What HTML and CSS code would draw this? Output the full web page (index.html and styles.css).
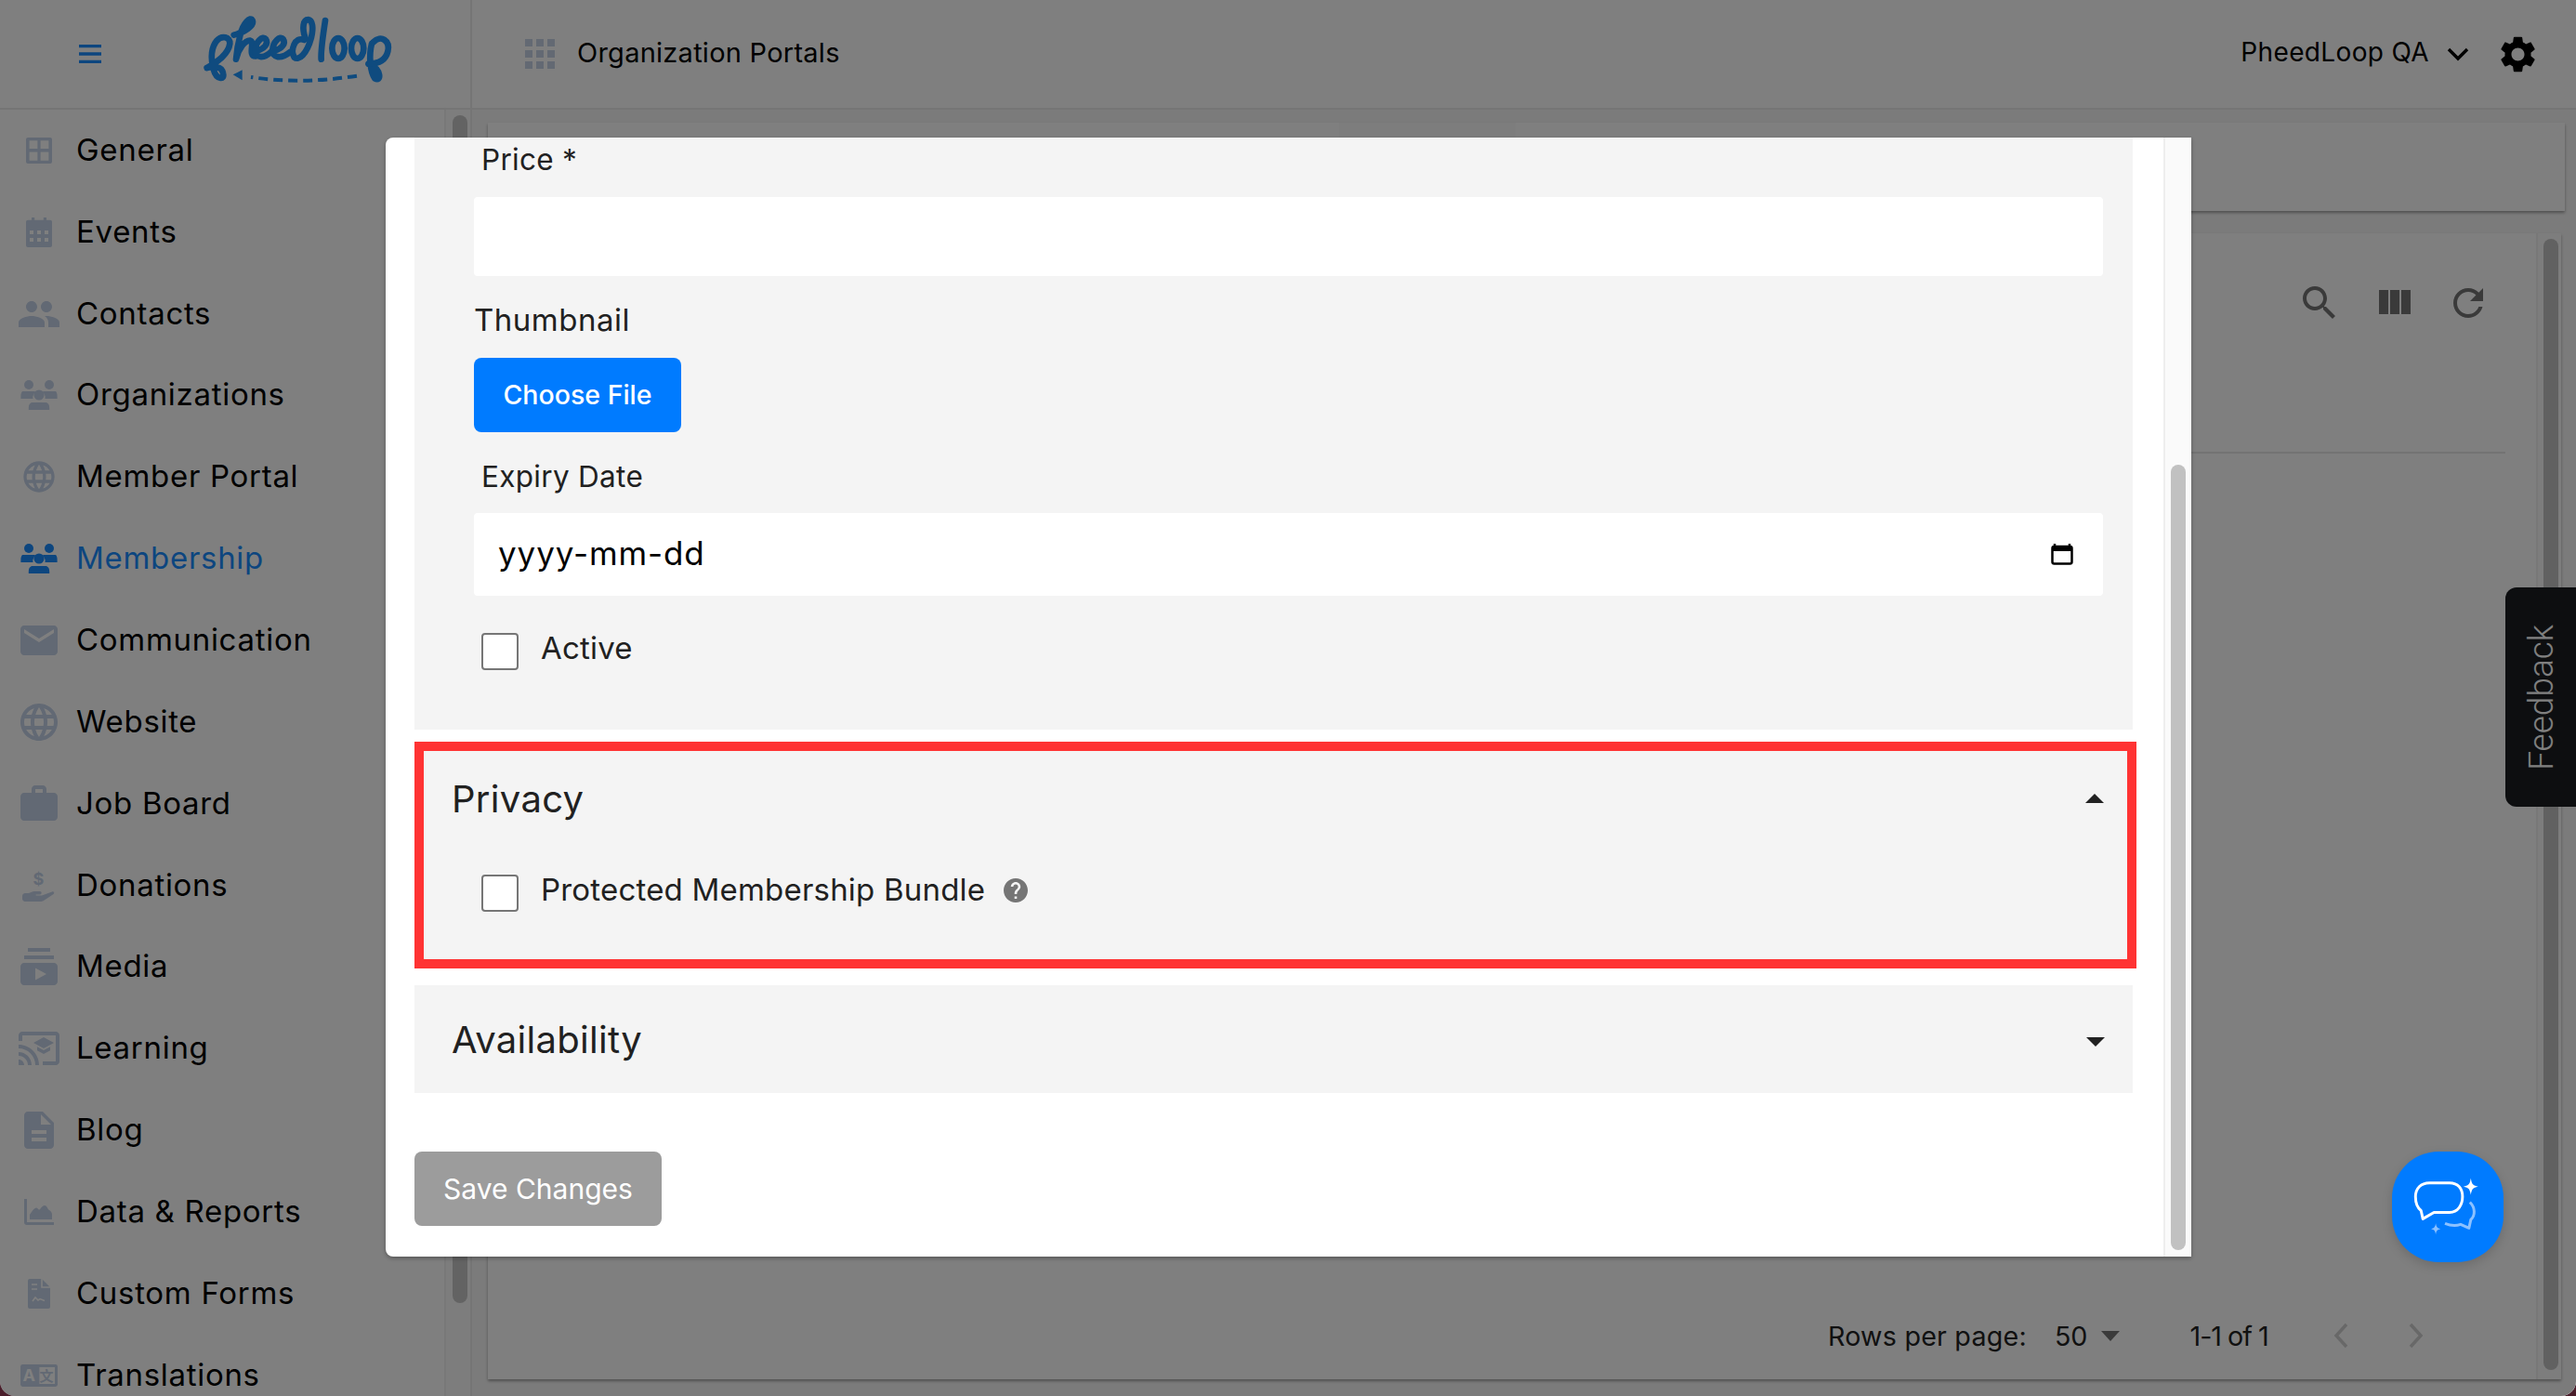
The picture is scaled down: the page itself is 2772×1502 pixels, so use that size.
FILE: index.html
```html
<!DOCTYPE html>
<html lang="en">
<head>
<meta charset="utf-8">
<title>Organization Portals</title>
<link rel="stylesheet" href="styles.css">
</head>
<body>
<div class="window">
  <header class="topbar">
    <div class="brand">
      <svg class="burger" viewBox="0 0 24 20"><path d="M0 1.500h24M0 10h24M0 18.500h24"/></svg>
      <svg class="logo" viewBox="0 0 900 360">
        <g class="logo-ink">
          <path d="M128 228C160 212 198 182 202 150C204 128 176 122 160 140C144 160 138 192 150 235C158 265 187 270 180 245C176 222 150 222 128 228"/>
          <path d="M215 122C250 112 282 92 275 75C268 60 245 85 236 120C228 150 224 176 222 200C230 165 252 138 268 140C284 144 258 192 286 190"/>
          <path d="M290 172C312 168 328 150 318 135C308 122 285 145 284 170C283 196 310 202 340 172"/>
          <path d="M346 172C368 168 384 150 374 135C364 122 341 145 340 170C339 196 366 202 398 176"/>
          <path d="M442 138C412 125 396 172 410 194C424 206 450 185 465 130C472 100 470 75 455 72C438 72 435 100 445 130"/>
          <path d="M510 75C505 110 495 170 497 200"/>
          <ellipse cx="552" cy="165" rx="20" ry="33"/>
          <ellipse cx="614" cy="165" rx="20" ry="33"/>
          <path d="M660 150C650 190 655 240 670 262C690 275 695 235 650 215"/>
          <path d="M665 145C690 120 720 140 712 175C705 205 680 215 650 215"/>
          <path class="logo-dash" d="M612 254Q430 282 270 258"/>
        </g>
        <path class="logo-head" d="M212 250L242 235V268Z"/>
      </svg>
    </div>
    <div class="topbar-main">
      <svg class="apps" viewBox="0 0 32 32"><path d="M0 0h8v8H0zM12 0h8v8h-8zM24 0h8v8h-8zM0 12h8v8H0zM12 12h8v8h-8zM24 12h8v8h-8zM0 24h8v8H0zM12 24h8v8h-8zM24 24h8v8h-8z"/></svg>
      <span class="portal-title">Organization Portals</span>
      <span class="org-name">PheedLoop QA</span>
      <svg class="org-chevron" viewBox="0 0 24 15"><path d="M2 2l10 10L22 2"/></svg>
      <svg class="gear" viewBox="2.500 2 19 20"><path d="M19.140 12.940c.04-.3.06-.61.06-.94 0-.32-.02-.64-.07-.94l2.030-1.580c.18-.14.23-.41.12-.61l-1.920-3.320c-.12-.22-.37-.29-.59-.22l-2.390.96c-.5-.38-1.030-.7-1.620-.94l-.36-2.540c-.04-.24-.24-.41-.48-.41h-3.840c-.24 0-.43.17-.47.41l-.36 2.540c-.59.24-1.130.57-1.620.94l-2.390-.96c-.22-.08-.47 0-.59.22L2.740 8.870c-.12.21-.08.47.12.61l2.030 1.580c-.05.3-.09.63-.09.94s.02.64.07.94l-2.030 1.580c-.18.14-.23.41-.12.61l1.920 3.320c.12.22.37.29.59.22l2.390-.96c.5.38 1.030.7 1.620.94l.36 2.540c.05.24.24.41.48.41h3.840c.24 0 .44-.17.47-.41l.36-2.540c.59-.24 1.130-.56 1.620-.94l2.390.96c.22.08.47 0 .59-.22l1.920-3.320c.12-.22.07-.47-.12-.61l-2.010-1.580zM12 15.600c-1.980 0-3.600-1.620-3.600-3.600s1.620-3.600 3.600-3.600 3.600 1.620 3.600 3.600-1.620 3.600-3.600 3.600z"/></svg>
    </div>
  </header>

  <div class="workspace">
    <aside class="sidebar">
      <nav class="nav">
        <a class="nav-item"><svg class="nav-icon" viewBox="0 0 24 24"><path fill-rule="evenodd" d="M6 5h12a1 1 0 0 1 1 1v12a1 1 0 0 1-1 1H6a1 1 0 0 1-1-1V6a1 1 0 0 1 1-1zm.8 1.600v4.400h4.400V6.600zm6 0v4.400h4.400V6.600zm-6 6.200v4.600h4.400v-4.600zm6 0v4.600h4.400v-4.600z"/></svg><span>General</span></a>
        <a class="nav-item"><svg class="nav-icon" viewBox="0 0 24 24"><path fill-rule="evenodd" d="M8 4h1.600v1.400h4.800V4H16v1.400h2a1 1 0 0 1 1 1V19a1 1 0 0 1-1 1H6a1 1 0 0 1-1-1V6.400a1 1 0 0 1 1-1h2zM7 11h2v2H7zm4 0h2v2h-2zm4 0h2v2h-2zM7 15h2v2H7zm4 0h2v2h-2zm4 0h2v2h-2z"/></svg><span>Events</span></a>
        <a class="nav-item"><svg class="nav-icon" viewBox="0 0 24 24"><path d="M16 11c1.660 0 2.990-1.340 2.990-3S17.660 5 16 5c-1.660 0-3 1.340-3 3s1.340 3 3 3zm-8 0c1.660 0 2.990-1.340 2.990-3S9.660 5 8 5C6.340 5 5 6.340 5 8s1.340 3 3 3zm0 2c-2.330 0-7 1.170-7 3.500V19h14v-2.500c0-2.330-4.670-3.500-7-3.500zm8 0c-.29 0-.62.02-.97.05 1.160.84 1.970 1.970 1.970 3.450V19h6v-2.500c0-2.330-4.670-3.500-7-3.500z"/></svg><span>Contacts</span></a>
        <a class="nav-item"><svg class="nav-icon" viewBox="0 0 24 24"><circle cx="6.500" cy="6.500" r="2.500"/><circle cx="17.500" cy="6.500" r="2.500"/><circle cx="12" cy="12" r="2.800"/><path d="M3 10h7l-.8 1.500c-.6 1-.6 1.800-.4 2.500H2.200v-1.500C2.200 11.500 2.500 10.500 3 10zM14 10h7c.6.5.8 1.500.8 2.500V14h-6.600c.2-.7.2-1.500-.4-2.500zM8 16h8c1 .5 1.600 1.300 1.600 3v1H6.400v-1c0-1.700.6-2.500 1.600-3z"/></svg><span>Organizations</span></a>
        <a class="nav-item"><svg class="nav-icon nav-icon-sm" viewBox="0 0 24 24"><path d="M11.990 2C6.470 2 2 6.480 2 12s4.470 10 9.990 10C17.520 22 22 17.520 22 12S17.520 2 11.990 2zm6.930 6h-2.950c-.32-1.250-.78-2.450-1.380-3.560 1.840.63 3.370 1.910 4.330 3.560zM12 4.040c.83 1.200 1.480 2.530 1.910 3.960h-3.820c.43-1.430 1.080-2.760 1.910-3.960zM4.260 14C4.100 13.360 4 12.690 4 12s.1-1.360.26-2h3.380c-.08.66-.14 1.320-.14 2 0 .68.06 1.340.14 2H4.260zm.82 2h2.950c.32 1.250.78 2.450 1.380 3.560-1.840-.63-3.370-1.900-4.330-3.560zm2.950-8H5.080c.96-1.660 2.490-2.930 4.330-3.560C8.810 5.550 8.350 6.750 8.030 8zM12 19.960c-.83-1.200-1.480-2.530-1.910-3.960h3.820c-.43 1.430-1.080 2.760-1.910 3.960zM14.340 14H9.660c-.09-.66-.16-1.320-.16-2 0-.68.07-1.350.16-2h4.680c.09.650.16 1.320.16 2 0 .68-.07 1.340-.16 2zm.25 5.560c.6-1.110 1.060-2.310 1.380-3.560h2.950c-.96 1.650-2.490 2.930-4.330 3.560zM16.360 14c.08-.66.14-1.320.14-2 0-.68-.06-1.340-.14-2h3.380c.16.640.26 1.310.26 2s-.1 1.360-.26 2h-3.380z"/></svg><span>Member Portal</span></a>
        <a class="nav-item is-active"><svg class="nav-icon" viewBox="0 0 24 24"><circle cx="6.500" cy="6.500" r="2.500"/><circle cx="17.500" cy="6.500" r="2.500"/><circle cx="12" cy="12" r="2.800"/><path d="M3 10h7l-.8 1.500c-.6 1-.6 1.800-.4 2.500H2.200v-1.500C2.200 11.500 2.500 10.500 3 10zM14 10h7c.6.5.8 1.500.8 2.500V14h-6.600c.2-.7.2-1.500-.4-2.500zM8 16h8c1 .5 1.600 1.300 1.600 3v1H6.400v-1c0-1.700.6-2.500 1.600-3z"/></svg><span>Membership</span></a>
        <a class="nav-item"><svg class="nav-icon" viewBox="0 0 24 24"><path d="M20 4H4c-1.100 0-1.990.9-1.990 2L2 18c0 1.100.9 2 2 2h16c1.100 0 2-.9 2-2V6c0-1.100-.9-2-2-2zm0 4l-8 5-8-5V6l8 5 8-5v2z"/></svg><span>Communication</span></a>
        <a class="nav-item"><svg class="nav-icon" viewBox="0 0 24 24"><path d="M11.990 2C6.470 2 2 6.480 2 12s4.470 10 9.990 10C17.520 22 22 17.520 22 12S17.520 2 11.990 2zm6.930 6h-2.950c-.32-1.250-.78-2.450-1.380-3.560 1.840.63 3.370 1.910 4.330 3.560zM12 4.040c.83 1.200 1.480 2.530 1.910 3.960h-3.820c.43-1.430 1.080-2.760 1.910-3.960zM4.260 14C4.100 13.360 4 12.690 4 12s.1-1.360.26-2h3.380c-.08.66-.14 1.320-.14 2 0 .68.06 1.340.14 2H4.260zm.82 2h2.950c.32 1.250.78 2.450 1.380 3.560-1.840-.63-3.370-1.900-4.330-3.560zm2.950-8H5.080c.96-1.660 2.490-2.930 4.330-3.560C8.810 5.550 8.350 6.750 8.030 8zM12 19.960c-.83-1.200-1.480-2.530-1.910-3.960h3.820c-.43 1.430-1.080 2.760-1.910 3.960zM14.340 14H9.660c-.09-.66-.16-1.320-.16-2 0-.68.07-1.350.16-2h4.680c.09.650.16 1.320.16 2 0 .68-.07 1.340-.16 2zm.25 5.560c.6-1.110 1.060-2.310 1.380-3.560h2.950c-.96 1.650-2.490 2.930-4.330 3.560zM16.360 14c.08-.66.14-1.320.14-2 0-.68-.06-1.340-.14-2h3.380c.16.640.26 1.310.26 2s-.1 1.360-.26 2h-3.380z"/></svg><span>Website</span></a>
        <a class="nav-item"><svg class="nav-icon" viewBox="0 0 24 24"><path d="M20 6h-4V4c0-1.110-.89-2-2-2h-4c-1.110 0-2 .89-2 2v2H4c-1.110 0-1.990.89-1.990 2L2 19c0 1.110.89 2 2 2h16c1.110 0 2-.89 2-2V8c0-1.110-.89-2-2-2zm-6 0h-4V4h4v2z"/></svg><span>Job Board</span></a>
        <a class="nav-item"><svg class="nav-icon" viewBox="0 0 24 24"><path d="M3 17.500c0-.8.7-1.500 1.500-1.500H6c1 0 2.500-1 3.500-1h3c1 0 1.200 1.700 0 1.700h-2c-.4 0-.4.5 0 .5h3l5.500-2c1-.3 1.500.7.800 1.300L14.500 20c-.6.4-1.200.5-2 .5H4.500c-.8 0-1.500-.7-1.500-1.500z"/><text class="nav-dollar" x="12" y="11.500">$</text></svg><span>Donations</span></a>
        <a class="nav-item"><svg class="nav-icon" viewBox="0 0 24 24"><path d="M20 8H4V6h16v2zm-2-6H6v2h12V2zm4 10v8c0 1.100-.9 2-2 2H4c-1.100 0-2-.9-2-2v-8c0-1.100.9-2 2-2h16c1.100 0 2 .9 2 2zm-6 4l-6-3.270v6.530L16 16z"/></svg><span>Media</span></a>
        <a class="nav-item"><svg class="nav-icon" viewBox="0 0 24 24"><path d="M21 3H3c-1.100 0-2 .9-2 2v3h2V5h18v14h-7v2h7c1.100 0 2-.9 2-2V5c0-1.100-.9-2-2-2zM1 18v3h3c0-1.660-1.340-3-3-3zm0-4v2c2.760 0 5 2.240 5 5h2c0-3.870-3.130-7-7-7zm0-4v2c4.970 0 9 4.030 9 9h2c0-6.080-4.930-11-11-11zm10 1.090v2L14.500 15l3.500-1.910v-2L14.500 13 11 11.090zM14.500 6L9 9l5.500 3L20 9l-5.500-3z"/></svg><span>Learning</span></a>
        <a class="nav-item"><svg class="nav-icon" viewBox="0 0 24 24"><path d="M14 2H6c-1.100 0-1.990.9-1.990 2L4 20c0 1.100.89 2 1.990 2H18c1.100 0 2-.9 2-2V8l-6-6zm2 16H8v-2h8v2zm0-4H8v-2h8v2zm-3-5V3.500L18.500 9H13z"/></svg><span>Blog</span></a>
        <a class="nav-item"><svg class="nav-icon" viewBox="0 0 24 24"><path d="M4 5h1.500v12.500H20V19H5.500A1.500 1.500 0 0 1 4 17.500zM7 16v-2.500C8 12 9.500 9.800 10.500 9.800c.8 0 1 1 1.500 1 .7 0 1.500-2.300 3-2.300 1.300 0 1.500 1.800 2.500 2.500 1 .7 1.500 1.500 1.500 2.500V16z"/></svg><span>Data &amp; Reports</span></a>
        <a class="nav-item"><svg class="nav-icon" viewBox="0 0 24 24"><path d="M7 4h6.500L18 8.500V19a1 1 0 0 1-1 1H7a1 1 0 0 1-1-1V5a1 1 0 0 1 1-1z"/><path class="nav-cut" d="M13.500 4v4.500H18M8 7h3M8 9.500h3M8.500 16l1.500-2 1.500 1.500 1-.7 2.500.9"/></svg><span>Custom Forms</span></a>
        <a class="nav-item"><svg class="nav-icon" viewBox="0 0 24 24"><rect x="2" y="6" width="20" height="12" rx="1.200"/><rect class="nav-pane" x="12.200" y="7.500" width="8.300" height="9"/><text class="nav-glyph" x="7" y="15">A</text><text class="nav-glyph-dark" x="16.300" y="15">文</text></svg><span>Translations</span></a>
      </nav>
      <div class="side-track"><div class="side-thumb"></div></div>
    </aside>

    <main class="content">
      <section class="tabs-card">
        <div class="tab"></div>
        <div class="tab tab-dim"></div>
        <div class="tab tab-fill"></div>
      </section>
      <section class="table-card">
        <div class="table-body">
          <div class="table-tools">
            <svg class="tool" viewBox="0 0 24 24"><path d="M15.500 14h-.79l-.28-.27C15.410 12.590 16 11.110 16 9.500 16 5.910 13.090 3 9.500 3S3 5.910 3 9.500 5.910 16 9.500 16c1.610 0 3.090-.59 4.230-1.570l.27.28v.79l5 4.990L20.490 19l-4.990-5zm-6 0C7.010 14 5 11.990 5 9.500S7.010 5 9.500 5 14 7.010 14 9.500 11.990 14 9.500 14z"/></svg>
            <svg class="tool" viewBox="0 0 24 24"><path d="M10 18h5V5h-5v13zm-6 0h5V5H4v13zM16 5v13h5V5h-5z"/></svg>
            <svg class="tool" viewBox="0 0 24 24"><path d="M17.650 6.350C16.200 4.900 14.210 4 12 4c-4.420 0-7.990 3.580-7.990 8s3.570 8 7.990 8c3.730 0 6.840-2.550 7.730-6h-2.080c-.82 2.330-3.040 4-5.650 4-3.310 0-6-2.690-6-6s2.690-6 6-6c1.660 0 3.140.69 4.220 1.780L13 11h7V4l-2.350 2.350z"/></svg>
          </div>
          <div class="table-rule"></div>
          <div class="pager">
            <span class="pager-label">Rows per page:</span>
            <span class="pager-size">50</span>
            <svg class="pager-caret" viewBox="0 0 20 11"><path d="M0 0h20L10 11z"/></svg>
            <span class="pager-range">1-1 of 1</span>
            <svg class="pager-arrow" viewBox="0 0 16 28"><path d="M14 2L3 14l11 12"/></svg>
            <svg class="pager-arrow" viewBox="0 0 16 28"><path d="M2 2l11 12L2 26"/></svg>
          </div>
        </div>
        <div class="table-track"><div class="table-thumb"></div></div>
      </section>
    </main>
  </div>

  <aside class="feedback"><span>Feedback</span></aside>
</div>

<div class="overlay"></div>

<div class="modal">
  <div class="modal-scroll">
    <div class="panel">
      <label class="field-label">Price *</label>
      <input class="text-input" type="text" aria-label="Price">
      <div class="thumb-label">Thumbnail</div>
      <button class="btn-primary" type="button">Choose File</button>
      <label class="field-label field-label-gap">Expiry Date</label>
      <div class="date-input">
        <span class="date-text">yyyy-mm-dd</span>
        <svg class="cal" viewBox="0 0 26 26"><path d="M5 2v3M21 2v3" class="cal-pin"/><rect x="2.500" y="5" width="21" height="18.500" rx="2" class="cal-box"/><path d="M2 6h22v4H2z"/></svg>
      </div>
      <div class="check-row check-row-active">
        <span class="check"></span><span class="check-label">Active</span>
      </div>
    </div>

    <section class="accordion accordion-flagged">
      <div class="accordion-head accordion-head-flagged">
        <h2 class="accordion-title">Privacy</h2>
        <svg class="accordion-caret" viewBox="0 0 20 10"><path d="M0 10L10 0l10 10z"/></svg>
      </div>
      <div class="check-row">
        <span class="check"></span><span class="check-label">Protected Membership Bundle</span>
        <svg class="help" viewBox="2 2 20 20"><path d="M12 2C6.480 2 2 6.480 2 12s4.480 10 10 10 10-4.480 10-10S17.520 2 12 2zm1 17h-2v-2h2v2zm2.070-7.750l-.9.920C13.450 12.900 13 13.500 13 15h-2v-.5c0-1.100.45-2.100 1.170-2.830l1.240-1.260c.37-.36.59-.86.59-1.410 0-1.100-.9-2-2-2s-2 .9-2 2H8c0-2.210 1.790-4 4-4s4 1.790 4 4c0 .88-.36 1.680-.93 2.250z"/></svg>
      </div>
    </section>

    <section class="accordion">
      <div class="accordion-head">
        <h2 class="accordion-title">Availability</h2>
        <svg class="accordion-caret accordion-caret-down" viewBox="0 0 20 10"><path d="M0 0l10 10L20 0z"/></svg>
      </div>
    </section>

    <button class="btn-save" type="button">Save Changes</button>
  </div>
  <div class="modal-track"><div class="modal-thumb"></div></div>
</div>

<button class="chat" type="button" aria-label="Chat">
  <svg viewBox="0 0 120 120">
    <path class="chat-line" d="M40 34h22c9 0 14 6 14 15s-5 17-14 17H45l-12 7-2-9c-4-3-6-8-6-15 0-9 6-15 15-15z"/>
    <path class="chat-soft" d="M84 55c6 6 6 14 1 19l-2 9-9-4c-6 2-12 1-17-1"/>
    <path class="chat-star" d="M85 29c1 6 2 8 8 9-6 1-7 3-8 9-1-6-2-8-8-9 6-1 7-3 8-9z"/>
    <path class="chat-star-soft" d="M47 78c.7 4 1.500 5 5 6-3.500 1-4.300 2-5 6-.7-4-1.500-5-5-6 3.500-1 4.300-2 5-6z"/>
  </svg>
</button>
</body>
</html>
```

FILE: styles.css
```css
* { box-sizing: border-box; }
html, body { margin: 0; height: 100%; }
body {
  width: 2772px;
  height: 1502px;
  overflow: hidden;
  position: relative;
  background: #4a1d2a;
  font-family: Inter, "Liberation Sans", sans-serif;
  color: #000;
}

/* application shell, dimmed by .overlay */
.window {
  position: relative;
  width: 2772px;
  height: 1502px;
  display: flex;
  flex-direction: column;
  background: #fff;
  overflow: hidden;
  border-radius: 0 0 16px 16px;
}
.topbar {
  display: flex;
  height: 118px;
  flex: none;
  border-bottom: 2px solid #ebebeb;
}
.brand {
  width: 508px;
  flex: none;
  display: flex;
  align-items: center;
  padding-left: 85px;
  border-right: 2px solid #ebebeb;
}
.burger { width: 24px; height: 20px; flex: none; }
.burger path { stroke: #1a8cff; stroke-width: 3.500; fill: none; }
.logo { width: 300px; height: 120px; flex: none; margin-left: 71px; margin-top: -2px; }
.logo-ink { fill: none; stroke: #1e96ff; stroke-width: 20; stroke-linecap: round; stroke-linejoin: round; }
.logo-dash { stroke-width: 12; stroke-dasharray: 30 18; stroke-linecap: butt; }
.logo-head { fill: #1e96ff; }

.topbar-main {
  flex: 1;
  display: flex;
  align-items: center;
  padding-left: 57px;
  padding-right: 44px;
}
.apps { width: 32px; height: 32px; fill: #c6d2e6; flex: none; }
.portal-title { font-size: 29px; margin-left: 24px; margin-top: -4px; letter-spacing: 0.25px; }
.org-name { font-size: 28px; margin-left: auto; margin-top: -4px; letter-spacing: 0.35px; }
.org-chevron { width: 24px; height: 15px; margin-left: 19px; fill: none; stroke: #000; stroke-width: 3.400; flex: none; }
.gear { width: 37px; height: 39px; margin-left: 34px; flex: none; }

.workspace { flex: 1; display: flex; min-height: 0; }

/* sidebar */
.sidebar {
  width: 508px;
  flex: none;
  display: flex;
  overflow: hidden;
  border-right: 2px solid #ebebeb;
}
.nav { flex: 1; display: flex; flex-direction: column; min-width: 0; }
.nav-item {
  flex: none;
  height: 87.850px;
  display: flex;
  align-items: center;
  gap: 16px;
  padding-left: 18px;
  font-size: 33px;
  letter-spacing: 0.7px;
  white-space: nowrap;
}
.nav-item span { margin-top: -2px; }
.nav-icon { width: 48px; height: 48px; flex: none; fill: #c4d2e8; }
.nav-icon-sm { padding: 4px; }
.is-active { color: #1a8cff; }
.is-active .nav-icon { fill: #1a8cff; }
.nav-dollar { font-size: 9px; font-weight: 700; text-anchor: middle; font-family: Inter, sans-serif; }
.nav-cut { fill: none; stroke: #fff; stroke-width: .8; }
.nav-pane { fill: #fff; }
.nav-glyph { font-size: 9px; font-weight: 700; fill: #fff; text-anchor: middle; font-family: Inter, sans-serif; }
.nav-glyph-dark { font-size: 7.500px; font-weight: 700; text-anchor: middle; font-family: "Noto Sans CJK SC", sans-serif; }
.side-track {
  width: 28px;
  flex: none;
  background: #fafafa;
  padding-top: 6px;
  padding-left: 7px;
  border-left: 2px solid #f0f0f0;
}
.side-thumb { width: 16px; height: 1278px; border-radius: 8px; background: #c6c6c6; }

/* main */
.content {
  flex: 1;
  min-width: 0;
  background: #f7f7f7;
  padding: 14px 12px 0 17px;
  display: flex;
  flex-direction: column;
}
.tabs-card {
  height: 95px;
  flex: none;
  display: flex;
  background: #fff;
  box-shadow: 0 2px 3px rgba(0,0,0,.35);
}
.tab { width: 916px; background: #fff; }
.tab-dim { width: 190px; background: #fafafa; }
.tab-fill { flex: 1; }
.table-card {
  height: 1233px;
  flex: none;
  width: 2231px;
  margin-top: 24px;
  display: flex;
  background: #fff;
  box-shadow: 0 2px 3px rgba(0,0,0,.35);
}
.table-body { flex: 1; min-width: 0; display: flex; flex-direction: column; }
.table-tools {
  height: 235px;
  display: flex;
  align-items: flex-start;
  gap: 32px;
  justify-content: flex-end;
  padding: 51px 49px 0 0;
}
.tool { width: 48px; height: 48px; fill: #757575; flex: none; }
.table-rule { height: 2px; background: #e6e6e6; margin-right: 33px; flex: none; }
.pager {
  margin-top: auto;
  height: 94px;
  display: flex;
  align-items: center;
  font-size: 28.700px;
  color: #222;
  padding-left: 1442px;
}
.pager-label { letter-spacing: .2px; }
.pager-size { margin-left: 30px; }
.pager-caret { width: 20px; height: 11px; fill: #757575; margin-left: 15px; flex: none; }
.pager-range { margin-left: 75px; letter-spacing: -1px; }
.pager-arrow { width: 16px; height: 28px; fill: none; stroke: #d0d0d0; stroke-width: 3.500; flex: none; margin-left: 70px; }
.pager-arrow + .pager-arrow { margin-left: 65px; }
.table-track {
  width: 27px;
  flex: none;
  padding: 6px 0 0 6px;
  border-left: 2px solid #f0f0f0;
  background: #fafafa;
}
.table-thumb { width: 16px; height: 1217px; border-radius: 8px; background: #c2c2c2; }

/* feedback tab sits on the page edge, under the dim layer */
.feedback {
  position: absolute;
  right: 0;
  top: 632px;
  width: 76px;
  height: 236px;
  background: #1a1c20;
  border-radius: 12px 0 0 12px;
  display: flex;
  align-items: center;
  justify-content: center;
  color: #fff;
  font-family: Roboto, "Liberation Sans", sans-serif;
  font-weight: 300;
  font-size: 37px;
}
.feedback span { writing-mode: vertical-rl; transform: rotate(180deg); }

.overlay {
  position: absolute;
  inset: 0;
  background: rgba(0,0,0,.5);
  border-radius: 0 0 16px 16px;
}

/* modal */
.modal {
  position: absolute;
  left: 415px;
  top: 148px;
  width: 1943px;
  height: 1204px;
  background: #fff;
  display: flex;
  border-radius: 8px 0 0 8px;
  overflow: hidden;
  box-shadow: 0 2px 4px rgba(0,0,0,.3);
}
.modal-scroll { flex: 1; min-width: 0; padding-left: 31px; }
.panel {
  width: 1849px;
  height: 637px;
  background: #f4f4f4;
  padding: 0 32px 0 64px;
  display: flex;
  flex-direction: column;
  align-items: flex-start;
}
.field-label {
  display: block;
  height: 48px;
  line-height: 48px;
  margin-left: 8px;
  font-size: 31.500px;
  letter-spacing: 0.3px;
  color: #212121;
  flex: none;
}
.field-label-gap { margin-top: 24px; }
.text-input {
  display: block;
  width: 100%;
  height: 85px;
  margin-top: 16px;
  border: 0;
  border-radius: 4px;
  background: #fff;
  flex: none;
}
.thumb-label {
  height: 48px;
  line-height: 48px;
  margin-top: 23px;
  font-size: 33px;
  letter-spacing: .5px;
  color: #212121;
  flex: none;
}
.btn-primary {
  width: 223px;
  height: 80px;
  margin-top: 17px;
  padding: 0 0 2px;
  border: 0;
  border-radius: 8px;
  background: #007bff;
  color: #fff;
  font: 500 28.500px Inter, "Liberation Sans", sans-serif;
  flex: none;
}
.date-input {
  width: 100%;
  height: 89px;
  margin-top: 15px;
  background: #fff;
  border-radius: 4px;
  display: flex;
  align-items: center;
  justify-content: space-between;
  padding: 0 31px 0 26px;
  font-size: 35px;
  letter-spacing: .9px;
  flex: none;
}
.date-text { margin-top: -3px; }
.cal { width: 26px; height: 26px; flex: none; margin-top: -2px; }
.cal-box { fill: none; stroke: #000; stroke-width: 2.500; }
.cal-pin { stroke: #000; stroke-width: 2.500; }
.check-row { display: flex; align-items: center; margin-left: 8px; flex: none; }
.check-row-active { margin-top: 40px; }
.check {
  width: 40px;
  height: 40px;
  flex: none;
  background: #fff;
  border: 2px solid #767676;
  border-radius: 4px;
}
.check-label {
  margin-left: 24px;
  margin-top: -8px;
  font-size: 33px;
  letter-spacing: .2px;
  color: #212121;
}
.help { width: 26px; height: 26px; margin-left: 20px; margin-top: -7px; fill: #757575; flex: none; }

.accordion {
  width: 1849px;
  background: #f4f4f4;
  margin-top: 18px;
  height: 116px;
}
.accordion-flagged {
  width: 1853px;
  height: 244px;
  margin-top: 13px;
  border: 10px solid #ff3333;
  padding-left: 62px;
}
.accordion-head {
  height: 116px;
  display: flex;
  align-items: center;
  justify-content: space-between;
  padding: 0 30px 0 40px;
}
.accordion-head-flagged {
  height: 102px;
  margin-left: -62px;
  padding: 0 25px 0 30px;
}
.accordion-title { margin: 0; font-size: 40px; font-weight: 400; letter-spacing: .3px; color: #212121; }
.accordion-caret { width: 20px; height: 10px; fill: #212121; flex: none; }
.accordion-caret-down { margin-top: 6px; }
.accordion-flagged .check-row { margin-left: 0; margin-top: 31px; }
.btn-save {
  display: block;
  width: 266px;
  height: 80px;
  margin-top: 63px;
  border: 0;
  border-radius: 8px;
  background: #9c9c9c;
  color: #fff;
  font: 400 30px Inter, "Liberation Sans", sans-serif;
}
.modal-track {
  width: 30px;
  flex: none;
  background: #fafafa;
  border-left: 2px solid #eee;
  padding: 352px 0 0 6px;
}
.modal-thumb { width: 16px; height: 845px; border-radius: 8px; background: #c1c1c1; }

/* chat launcher */
.chat {
  position: absolute;
  left: 2574px;
  top: 1239px;
  width: 120px;
  height: 119px;
  padding: 0;
  border: 0;
  border-radius: 42%;
  background: #007bff;
  box-shadow: 0 4px 12px rgba(0,0,0,.15);
}
.chat svg { display: block; width: 120px; height: 119px; }
.chat-line { fill: none; stroke: #fff; stroke-width: 3; stroke-linejoin: round; }
.chat-soft { fill: none; stroke: #8cc1ff; stroke-width: 3; stroke-linejoin: round; }
.chat-star { fill: #fff; }
.chat-star-soft { fill: #8cc1ff; }
```
